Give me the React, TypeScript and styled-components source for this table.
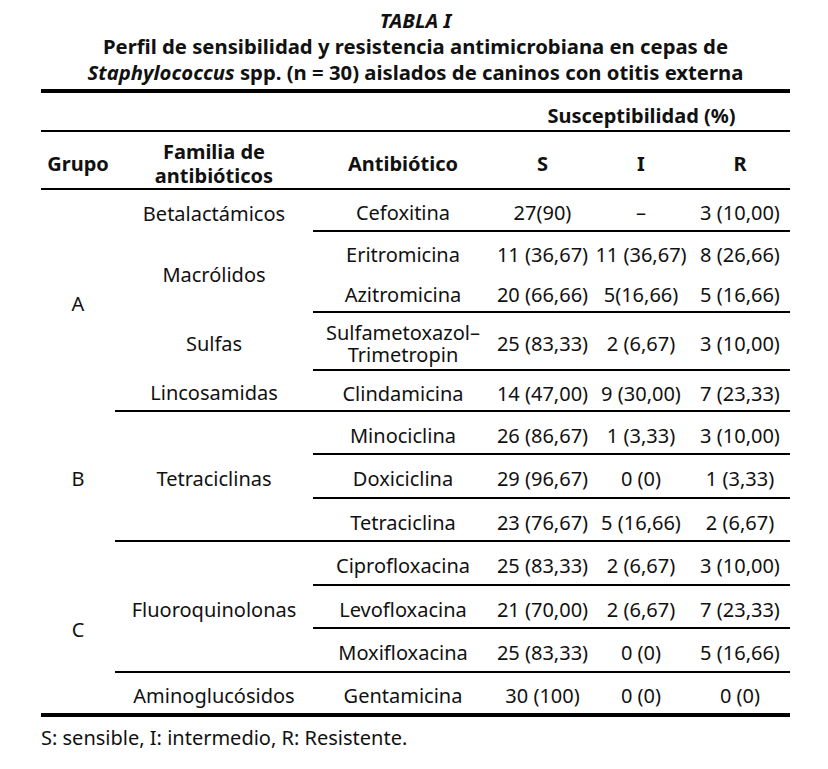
import React from 'react';
import styled, { createGlobalStyle } from 'styled-components';

const GlobalStyle = createGlobalStyle`
  body {
    margin: 0;
    background: #ffffff;
    color: #111111;
    font-family: "Noto Sans", "Open Sans", sans-serif;
  }
`;

const Page = styled.div`
  width: 749px;
  margin-left: 41px;
  padding-top: 7px;
`;

const Caption = styled.div`
  text-align: center;
  font-weight: 700;
  font-size: 20.3px;
  line-height: 26px;
  padding-bottom: 4px;
`;

const Table = styled.table`
  width: 749px;
  border-collapse: collapse;
  table-layout: fixed;
  font-size: 20px;
  border-top: 4px solid #000;
  border-bottom: 4px solid #000;
`;

const Row = styled.tr<{ $h: number }>`
  height: ${(p) => p.$h}px;
`;

const Head = styled.th<{ $line?: boolean }>`
  font-weight: 700;
  text-align: center;
  vertical-align: middle;
  padding: 8px 0 0;
  line-height: 24px;
  border-bottom: ${(p) => (p.$line ? '2px solid #000' : 'none')};
`;

const Cell = styled.td<{ $line?: boolean }>`
  font-weight: 400;
  text-align: center;
  vertical-align: middle;
  padding: 6px 0 0;
  line-height: 22px;
  white-space: nowrap;
  border-bottom: ${(p) => (p.$line ? '2px solid #000' : 'none')};
`;

const Note = styled.div`
  font-size: 20px;
  line-height: 24px;
  padding-top: 9px;
`;

type Drug = {
  h: number;
  group?: { name: string; span: number };
  family?: { name: string; span: number; line: boolean };
  drug: React.ReactNode;
  s: string;
  i: string;
  r: string;
  line: boolean;
};

const rows: Drug[] = [
  { h: 42, group: { name: 'A', span: 5 }, family: { name: 'Betalactámicos', span: 1, line: false }, drug: 'Cefoxitina', s: '27(90)', i: '–', r: '3 (10,00)', line: true },
  { h: 41, family: { name: 'Macrólidos', span: 2, line: false }, drug: 'Eritromicina', s: '11 (36,67)', i: '11 (36,67)', r: '8 (26,66)', line: false },
  { h: 40, drug: 'Azitromicina', s: '20 (66,66)', i: '5(16,66)', r: '5 (16,66)', line: true },
  { h: 58, family: { name: 'Sulfas', span: 1, line: false }, drug: <>Sulfametoxazol–<br />Trimetropin</>, s: '25 (83,33)', i: '2 (6,67)', r: '3 (10,00)', line: true },
  { h: 41, family: { name: 'Lincosamidas', span: 1, line: true }, drug: 'Clindamicina', s: '14 (47,00)', i: '9 (30,00)', r: '7 (23,33)', line: true },
  { h: 43, group: { name: 'B', span: 3 }, family: { name: 'Tetraciclinas', span: 3, line: true }, drug: 'Minociclina', s: '26 (86,67)', i: '1 (3,33)', r: '3 (10,00)', line: true },
  { h: 44, drug: 'Doxiciclina', s: '29 (96,67)', i: '0 (0)', r: '1 (3,33)', line: true },
  { h: 43, drug: 'Tetraciclina', s: '23 (76,67)', i: '5 (16,66)', r: '2 (6,67)', line: true },
  { h: 44, group: { name: 'C', span: 4 }, family: { name: 'Fluoroquinolonas', span: 3, line: true }, drug: 'Ciprofloxacina', s: '25 (83,33)', i: '2 (6,67)', r: '3 (10,00)', line: true },
  { h: 43, drug: 'Levofloxacina', s: '21 (70,00)', i: '2 (6,67)', r: '7 (23,33)', line: true },
  { h: 44, drug: 'Moxifloxacina', s: '25 (83,33)', i: '0 (0)', r: '5 (16,66)', line: true },
  { h: 43, family: { name: 'Aminoglucósidos', span: 1, line: false }, drug: 'Gentamicina', s: '30 (100)', i: '0 (0)', r: '0 (0)', line: false },
];

function App() {
  return (
    <Page>
      <GlobalStyle />
      <Caption>
        <i>TABLA I</i>
        <br />
        Perfil de sensibilidad y resistencia antimicrobiana en cepas de
        <br />
        <i>Staphylococcus</i> spp. (n = 30) aislados de caninos con otitis externa
      </Caption>
      <Table>
        <colgroup>
          <col style={{ width: 74 }} />
          <col style={{ width: 198 }} />
          <col style={{ width: 180 }} />
          <col style={{ width: 99 }} />
          <col style={{ width: 98 }} />
          <col style={{ width: 100 }} />
        </colgroup>
        <thead>
          <Row $h={40}>
            <Head $line colSpan={3}></Head>
            <Head $line colSpan={3}>Susceptibilidad (%)</Head>
          </Row>
          <Row $h={58}>
            <Head $line>Grupo</Head>
            <Head $line>Familia de<br />antibióticos</Head>
            <Head $line>Antibiótico</Head>
            <Head $line>S</Head>
            <Head $line>I</Head>
            <Head $line>R</Head>
          </Row>
        </thead>
        <tbody>
          {rows.map((row, idx) => (
            <Row $h={row.h} key={idx}>
              {row.group && <Cell rowSpan={row.group.span}>{row.group.name}</Cell>}
              {row.family && (
                <Cell rowSpan={row.family.span} $line={row.family.line}>
                  {row.family.name}
                </Cell>
              )}
              <Cell $line={row.line}>{row.drug}</Cell>
              <Cell $line={row.line}>{row.s}</Cell>
              <Cell $line={row.line}>{row.i}</Cell>
              <Cell $line={row.line}>{row.r}</Cell>
            </Row>
          ))}
        </tbody>
      </Table>
      <Note>S: sensible, I: intermedio, R: Resistente.</Note>
    </Page>
  );
}

export default App;
